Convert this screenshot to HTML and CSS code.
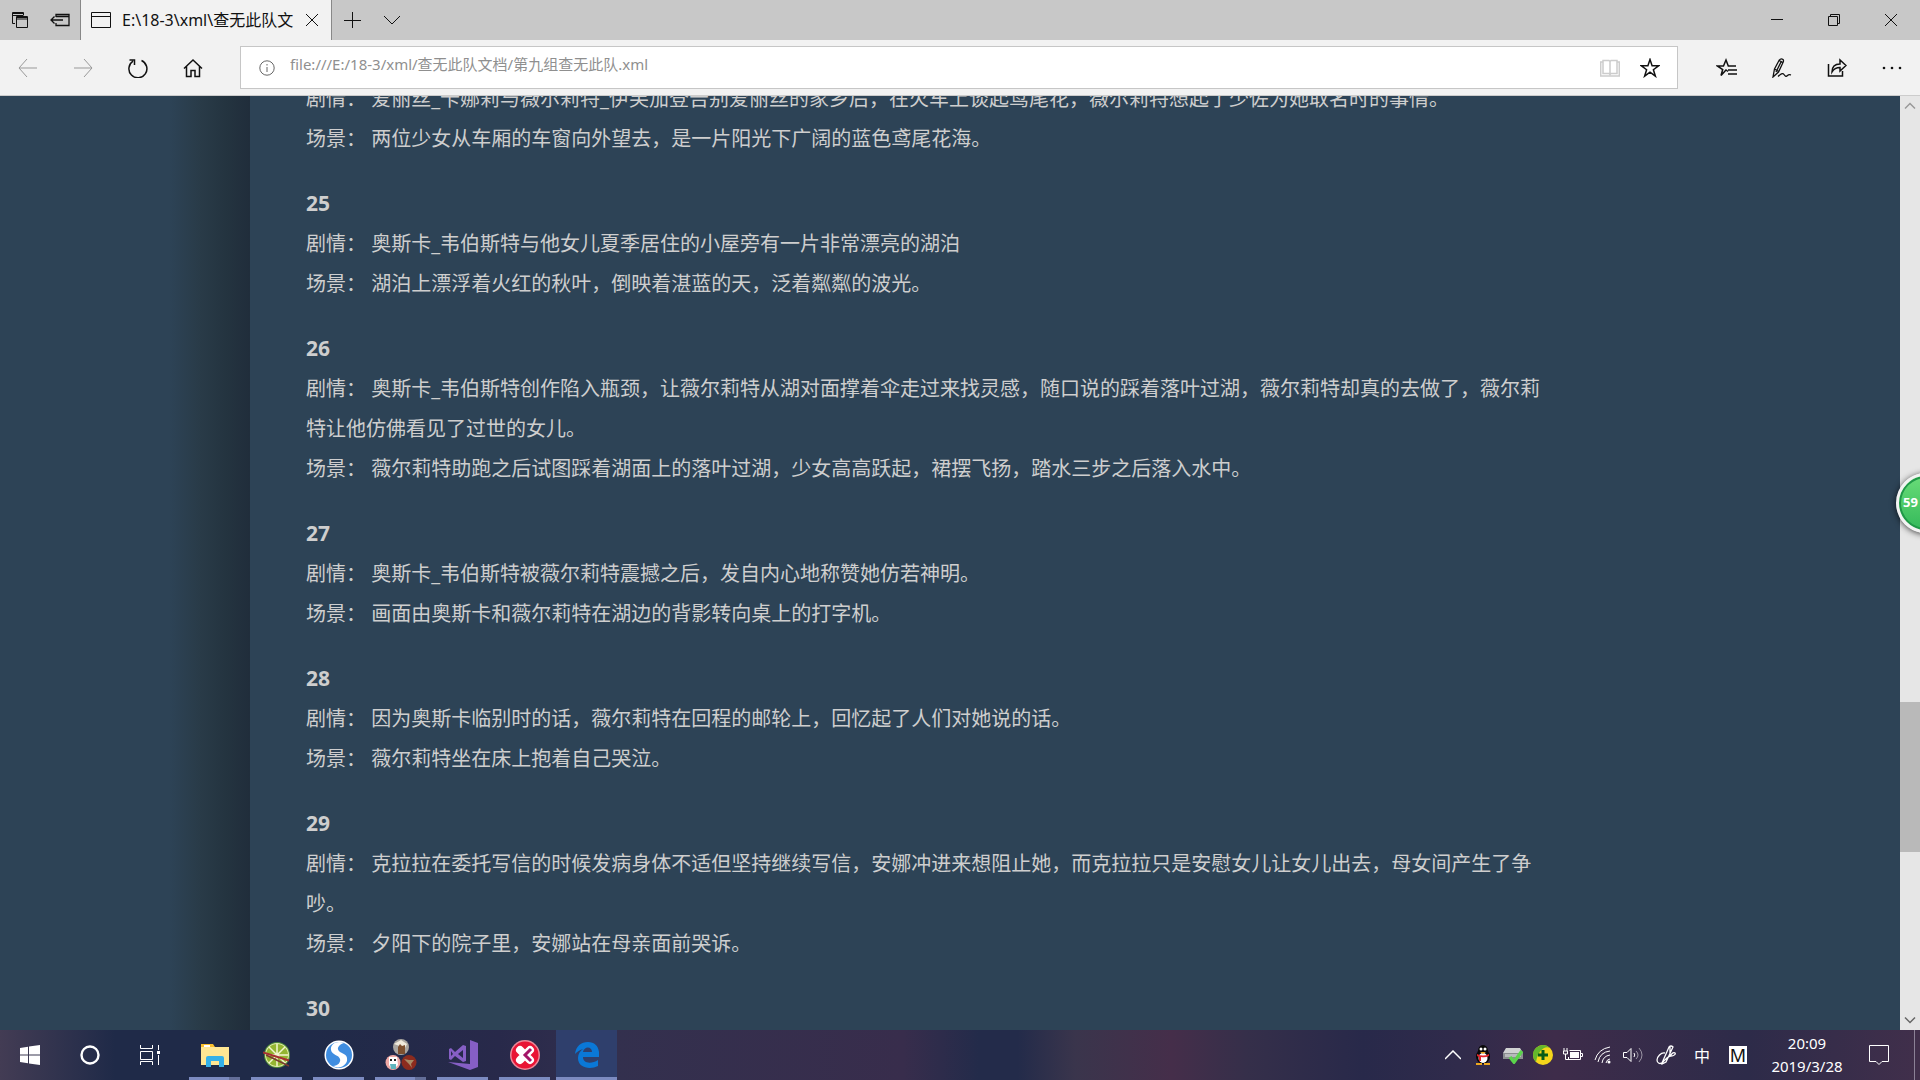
FILE: index.html
```html
<!DOCTYPE html>
<html lang="zh-CN">
<head>
<meta charset="utf-8">
<title>E:\18-3\xml\查无此队文档</title>
<link rel="stylesheet" href="styles.css">
</head>
<body>
<header class="tabbar">
  <button class="tab-tool" aria-label="标签页"><svg width="20" height="20" viewBox="0 0 20 20"><path d="M5 13.500H2.500V2.500h11V5M2.500 5.500h11" /><path d="M6.500 6.500h11v11h-11zM6.500 9h11"/><path d="M2.500 3.500h11M6.500 7.500h11"/></svg></button>
  <button class="tab-tool" aria-label="搁置标签页"><svg width="22" height="20" viewBox="0 0 22 20"><path d="M7 7V4.500h13v11H7V13M7 6.500h13M2 10h12M5.500 6.500L2 10l3.500 3.500" stroke-width="1.300"/></svg></button>
  <div class="tab">
    <svg width="22" height="20" viewBox="0 0 22 20"><path d="M1.500 2.500h19v15h-19zM1.500 6.500h19"/></svg>
    <span class="tab-title">E:\18-3\xml\查无此队文</span>
    <button class="tab-close" aria-label="关闭标签页"><svg width="14" height="14" viewBox="0 0 14 14"><path d="M1 1l12 12M13 1L1 13"/></svg></button>
  </div>
  <button class="tab-new" aria-label="新建标签页"><svg width="18" height="18" viewBox="0 0 18 18"><path d="M9.500 1v16M1 9.500h17"/></svg></button>
  <button class="tab-new" aria-label="预览"><svg width="18" height="18" viewBox="0 0 18 18"><path d="M1 5l8 8 8-8"/></svg></button>
  <div class="window-buttons">
    <button aria-label="最小化"><svg width="12" height="12" viewBox="0 0 12 12"><path d="M0 5.500h12"/></svg></button>
    <button aria-label="还原"><svg width="12" height="12" viewBox="0 0 12 12"><path d="M.5 2.500h9v9h-9zM2.500 2.500v-2h9v9h-2"/></svg></button>
    <button aria-label="关闭"><svg width="12" height="12" viewBox="0 0 12 12"><path d="M0 0l12 12M12 0L0 12"/></svg></button>
  </div>
</header>

<nav class="toolbar">
  <button class="nav-button" disabled aria-label="后退"><svg width="20" height="20" viewBox="0 0 20 20"><path d="M1 10h18M9 1l-8 9 8 9"/></svg></button>
  <button class="nav-button" disabled aria-label="前进"><svg width="20" height="20" viewBox="0 0 20 20"><path d="M19 10H1M11 1l8 9-8 9"/></svg></button>
  <button class="nav-button" aria-label="刷新"><svg class="bold" width="20" height="20" viewBox="0 0 20 20"><path d="M13.500 2.500A9 9 0 1 1 5 3.200M1.500 2h5v5"/></svg></button>
  <button class="nav-button" aria-label="主页"><svg class="bold" width="20" height="20" viewBox="0 0 20 20"><path d="M1 10.500L10 2l9 8.500M3.500 8.500v10h4.500v-6h4v6h4.500v-10"/></svg></button>
  <div class="address">
    <svg class="info" width="16" height="16" viewBox="0 0 16 16"><circle cx="8" cy="8" r="7.200"/><path d="M8 7v5M8 4v1.500"/></svg>
    <input class="url" type="text" aria-label="地址" value="file:///E:/18-3/xml/查无此队文档/第九组查无此队.xml">
    <button class="address-button pale" aria-label="阅读视图"><svg class="bold" width="20" height="20" viewBox="0 0 20 20"><path d="M3 2.500h6l1 1 1-1h6v13h-6l-1 1-1-1H3zM10 3v14M3 4H.7v14h18.600V4H17"/></svg></button>
    <button class="address-button" aria-label="添加到收藏夹"><svg class="bold" width="20" height="20" viewBox="0 0 20 20"><path d="M10 1.500l2.100 6.300h6.500l-5.200 3.900 2 6.500-5.400-4-5.400 4 2-6.500L1.400 7.800h6.500z"/></svg></button>
  </div>
  <div class="toolbar-end">
    <button class="nav-button" aria-label="中心"><svg class="bold" width="22" height="20" viewBox="0 0 22 20"><path d="M12 13.500l-2-1.500-5 5.500 1.700-6L1.300 8h6.200L10 2l2.300 6H20M12 12h9M12 16h9"/></svg></button>
    <button class="nav-button" aria-label="添加笔记"><svg width="20" height="20" viewBox="0 0 20 20"><path stroke-width="1.300" d="M1 19l1.500-8L7 2.500Q9 0 11 1.500q1 1 0 3L6.500 14zM2.500 11l4 2.500M7 2.500l4 2M9.500 3L4 14M6 18.500c4-3.500 5-3.500 6-2s2 2.500 3.500 1 2-1 3.500-.5"/></svg></button>
    <button class="nav-button" aria-label="共享"><svg class="bold" width="20" height="20" viewBox="0 0 20 20"><path d="M1.500 6v12h14v-5M5 14c0-5 3-8 8-8V2l6 5.500-6 5.500V9.500c-4 0-6 1-8 4.500z"/></svg></button>
    <button class="nav-button" aria-label="更多"><svg width="20" height="20" viewBox="0 0 20 20"><g class="solid"><circle cx="2" cy="10" r="1.300"/><circle cx="10" cy="10" r="1.300"/><circle cx="18" cy="10" r="1.300"/></g></svg></button>
  </div>
</nav>

<div class="viewport">
  <aside class="side"></aside>
  <main class="story">
    <section>
      <p>剧情： 爱丽丝_卡娜莉与薇尔莉特_伊芙加登告别爱丽丝的家乡后，在火车上谈起鸢尾花，薇尔莉特想起了少佐为她取名时的事情。</p>
      <p>场景： 两位少女从车厢的车窗向外望去，是一片阳光下广阔的蓝色鸢尾花海。</p>
    </section>
    <section>
      <h2>25</h2>
      <p>剧情： 奥斯卡_韦伯斯特与他女儿夏季居住的小屋旁有一片非常漂亮的湖泊</p>
      <p>场景： 湖泊上漂浮着火红的秋叶，倒映着湛蓝的天，泛着粼粼的波光。</p>
    </section>
    <section>
      <h2>26</h2>
      <p>剧情： 奥斯卡_韦伯斯特创作陷入瓶颈，让薇尔莉特从湖对面撑着伞走过来找灵感，随口说的踩着落叶过湖，薇尔莉特却真的去做了，薇尔莉特让他仿佛看见了过世的女儿。</p>
      <p>场景： 薇尔莉特助跑之后试图踩着湖面上的落叶过湖，少女高高跃起，裙摆飞扬，踏水三步之后落入水中。</p>
    </section>
    <section>
      <h2>27</h2>
      <p>剧情： 奥斯卡_韦伯斯特被薇尔莉特震撼之后，发自内心地称赞她仿若神明。</p>
      <p>场景： 画面由奥斯卡和薇尔莉特在湖边的背影转向桌上的打字机。</p>
    </section>
    <section>
      <h2>28</h2>
      <p>剧情： 因为奥斯卡临别时的话，薇尔莉特在回程的邮轮上，回忆起了人们对她说的话。</p>
      <p>场景： 薇尔莉特坐在床上抱着自己哭泣。</p>
    </section>
    <section>
      <h2>29</h2>
      <p>剧情： 克拉拉在委托写信的时候发病身体不适但坚持继续写信，安娜冲进来想阻止她，而克拉拉只是安慰女儿让女儿出去，母女间产生了争吵。</p>
      <p>场景： 夕阳下的院子里，安娜站在母亲面前哭诉。</p>
    </section>
    <section>
      <h2>30</h2>
    </section>
  </main>
  <div class="scrollbar">
    <button aria-label="向上滚动"><svg width="12" height="8" viewBox="0 0 12 8"><path d="M1 6.500l5-5 5 5"/></svg></button>
    <div class="track-above"></div>
    <div class="thumb"></div>
    <div class="track-below"></div>
    <button class="scroll-down" aria-label="向下滚动"><svg width="12" height="8" viewBox="0 0 12 8"><path d="M1 1.500l5 5 5-5"/></svg></button>
  </div>
  <div class="ball">59</div>
</div>

<footer class="taskbar">
  <div class="system">
    <button aria-label="开始"><svg width="20" height="20" viewBox="0 0 20 20"><path class="fill" d="M0 3l8-1.200v7.700H0zM9 1.600L20 0v9.500H9zM0 10.500h8v7.700L0 17zM9 10.500h11V20L9 18.400z"/></svg></button>
    <button aria-label="搜索"><svg width="20" height="20" viewBox="0 0 20 20"><circle cx="10" cy="10" r="8.500" stroke-width="2.400"/></svg></button>
    <button aria-label="任务视图"><svg width="20" height="20" viewBox="0 0 20 20"><path d="M.5 0v3.500h12V0M.5 20v-3.500h12V20M.5 6.500h12v8H.5zM18.500 0v5M18.500 10v10"/><path class="fill" d="M17 6h3v3h-3z"/></svg></button>
  </div>
  <div class="apps">
    <button class="app grouped" aria-label="文件资源管理器"><svg width="28" height="24" viewBox="0 0 28 24"><path fill="#fbc02d" d="M0 1h12l2 3v5H0z"/><path fill="#ffe793" d="M0 4h28v18H0z"/><path fill="#fff" d="M3 2h6v2H3z"/><path fill="#35b1e8" d="M5 24V15q0-2 2-2h14q2 0 2 2v9h-5v-6H10v6z"/></svg></button>
    <button class="app" aria-label="青柠"><svg width="28" height="28" viewBox="0 0 28 28"><circle cx="14" cy="14" r="13" fill="#4f8c3a"/><circle cx="14" cy="14" r="12" fill="#e6efad"/><circle cx="14" cy="14" r="11" fill="#94b531"/><path class="pith" d="M14 3v22M3 14h22M6 6l16 16M22 6L6 22"/><path class="straw" d="M0 11.500l26 8"/><path class="straw dark" d="M3 14l23 11"/></svg></button>
    <button class="app" aria-label="搜狗浏览器"><svg width="30" height="30" viewBox="0 0 30 30"><circle cx="15" cy="15" r="14.500" fill="#fff"/><circle cx="15" cy="15" r="13" fill="#3f8de0"/><path d="M20 3c-7-3-14 1-13 7 1 5 8 5 9 9 1 3-2 7-7 7 5 3 12 1 14-5 1-6-3-7-7-9-4-3-2-7 4-9z" fill="#fff"/></svg></button>
    <button class="app grouped" aria-label="聊天"><svg width="32" height="32" viewBox="0 0 32 32"><circle cx="16" cy="8" r="8" fill="#aaa6a0"/><path fill="#f0eadc" d="M9 5l7-4 6 4-2 4z"/><path fill="#7d5030" d="M13 8l2-3 2 2 3-1v9h-7z"/><circle cx="8" cy="23.500" r="7.500" fill="#f0a9a5"/><path fill="#fff" d="M4 18h8l1 8-3 3H6l-2-3z"/><path fill="#61b5bd" d="M5 25h6v5H6z"/><path fill="#222" d="M5 20h2v2H5zM9 20h2v2H9z"/><circle cx="24" cy="23.500" r="7.500" fill="#8c2b1e"/><path fill="#a88a65" d="M19 20l5 1 5 0-3 4 1 4-3-4z"/></svg></button>
    <button class="app" aria-label="Visual Studio"><svg width="30" height="30" viewBox="0 0 30 30"><path fill="#865fc5" d="M22 0l8 3v24l-8 3L0 22l22 2zM1 9l2-1 4 4 8-7 3 1v15l-3 1-8-6-4 4-2-1zM3 11v5l2-2zM15 10l-5 4 5 4z" fill-rule="evenodd"/></svg></button>
    <button class="app" aria-label="XMLSpy"><svg width="30" height="30" viewBox="0 0 30 30"><circle cx="15" cy="15" r="15" fill="#eb8999"/><circle cx="15" cy="15" r="13.500" fill="#e91435"/><path d="M10 10l10 10M20 10L10 20" stroke="#fff" stroke-width="8" stroke-linecap="round"/><path d="M21 9l-6 6 6 6" stroke="#a31568" stroke-width="3"/></svg></button>
    <button class="app active" aria-label="Microsoft Edge"><svg width="24" height="26" viewBox="0 0 24 26"><path fill="#0a78d7" d="M0 12C1 4 6 0 13 0c8 0 12 6 11 15H8c0 7 9 7 15 3v6c-8 4-20 2-20-8 0-4 2-7 5-9-4 1-6 3-8 5zM8 10h9c0-6-8-6-9 0z"/></svg></button>
  </div>
  <div class="tray">
    <button class="tray-icon" aria-label="显示隐藏的图标"><svg class="bold" width="16" height="10" viewBox="0 0 16 10"><path d="M0 9l8-8 8 8"/></svg></button>
    <button class="tray-icon" aria-label="QQ"><svg width="16" height="20" viewBox="0 0 16 20"><ellipse cx="8" cy="11.500" rx="7" ry="7.500" fill="#080808"/><ellipse cx="8" cy="6" rx="5" ry="6" fill="#080808"/><ellipse cx="8" cy="13" rx="4.500" ry="5" fill="#fff"/><circle cx="6" cy="4" r="1.500" fill="#fff"/><circle cx="10" cy="4" r="1.500" fill="#fff"/><path fill="#eda61f" d="M5 7h6l-3 2zM1 18h6v2H1zM9 18h6v2H9z"/><path fill="#e3242b" d="M2 9q6 3 12 0v2q-4 2-8 1v4H4v-4l-2-1z"/></svg></button>
    <button class="tray-icon" aria-label="安全删除硬件"><svg width="20" height="18" viewBox="0 0 20 18"><path fill="#d0d2d2" d="M3 2h14l3 5v5H0V7z"/><path fill="#8b8e90" d="M0 7h20v6H0z"/><path fill="#b8babc" d="M2 8h16v3H2z"/><path d="M7 11l4 5 8-11" stroke="#5bd34c" stroke-width="3.500"/></svg></button>
    <button class="tray-icon" aria-label="安全卫士"><svg width="20" height="20" viewBox="0 0 20 20"><circle cx="10" cy="10" r="10" fill="#f4d51b"/><path fill="#64b72c" d="M0 10A10 10 0 0 1 17 3C12 0 5 5 3 17Q0 14 0 10z"/><path d="M10 5v10M5 10h10" stroke="#075b18" stroke-width="3"/></svg></button>
    <button class="tray-icon" aria-label="电池"><svg width="20" height="16" viewBox="0 0 20 16"><path d="M6.500 3.500h11v9h-12V10M18 6.500h1.500v3H18M1 1v3M4 1v3M.5 4v3h4V4zM2.500 7v5.500H6"/><path class="fill" d="M7 5h9v6H7z"/></svg></button>
    <button class="tray-icon" aria-label="网络"><svg width="18" height="18" viewBox="0 0 18 18"><path d="M1 14Q4 3 16 1M4 16Q6 6 16 5M8 17Q9 10 16 9M12 17q1-4 4-4"/><circle class="fill" cx="15" cy="16" r="1.500"/></svg></button>
    <button class="tray-icon" aria-label="音量"><svg width="20" height="16" viewBox="0 0 20 16"><path d="M.5 5.500H4l4-4v13l-4-4H.5zM11 6q1.500 2 0 4"/><path opacity=".5" d="M13 4q4 4 0 8M16 1q6 7 0 14"/></svg></button>
    <button class="tray-icon wide" aria-label="Windows Ink"><svg width="20" height="20" viewBox="0 0 20 20"><path stroke-width="1.300" d="M6 18L13 2q2-2 4 0L10 17l-4 2zM14 2v9M9 8C5 7 1 12 1 15s3 5 6 2 5-6 8-6 5-2 4-3-3 0-4 2"/></svg></button>
    <button class="tray-icon wide ime">中</button>
    <button class="tray-icon wide"><span class="mode">M</span></button>
    <button class="clock"><time>20:09</time><time>2019/3/28</time></button>
    <button class="notice" aria-label="操作中心"><svg width="20" height="20" viewBox="0 0 20 20"><path d="M.5.5h19v16H13l-3 3-3-3H.5z"/></svg></button>
  </div>
</footer>
</body>
</html>
```
FILE: styles.css
```css
* { box-sizing: border-box; }

body {
  margin: 0;
  height: 100vh;
  display: flex;
  flex-direction: column;
  overflow: hidden;
  background: #2d4356;
  font-family: "Noto Sans", "Noto Sans CJK SC", sans-serif;
}

button {
  display: flex;
  align-items: center;
  justify-content: center;
  margin: 0;
  padding: 0;
  border: 0;
  background: none;
  color: inherit;
  font: inherit;
}

svg {
  flex: none;
  fill: none;
  stroke: currentColor;
}

svg [fill] { stroke: none; }
svg .fill, svg .solid { fill: currentColor; stroke: none; }
.bold { stroke-width: 1.5; }

/* Tab strip */
.tabbar {
  display: flex;
  flex: none;
  height: 40px;
  background: #c8c8c8;
  color: #111;
}

.tab-tool { width: 40px; }

.tab {
  display: flex;
  align-items: center;
  width: 252px;
  padding: 0 12px 0 9px;
  gap: 10px;
  border: solid #888;
  border-width: 0 1px;
  background: #f2f2f2;
}

.tab-title {
  flex: 1;
  overflow: hidden;
  font-size: 16px;
  line-height: 24px;
  white-space: nowrap;
}

.tab-new { width: 40px; }

.window-buttons {
  display: flex;
  margin-left: auto;
  padding-right: 1px;
}

.window-buttons button { width: 57px; }

/* Navigation and address */
.toolbar {
  display: flex;
  flex: none;
  align-items: center;
  height: 56px;
  border-bottom: 1px solid #ccc;
  background: #f2f2f2;
  color: #111;
}

.nav-button { width: 55px; height: 55px; }
.nav-button:disabled { color: #999; }

.address {
  display: flex;
  flex: 1;
  align-items: center;
  height: 43px;
  margin-left: 20px;
  padding: 0 7px 0 18px;
  border: 1px solid #c6c6c6;
  background: #fff;
}

.info { color: #666; }

.url {
  flex: 1;
  min-width: 0;
  height: 28px;
  margin: 0 0 8px 15px;
  padding: 0;
  border: 0;
  outline: 0;
  background: none;
  color: #8f8f8f;
  font-family: inherit;
  font-size: 15px;
}

.address-button { width: 40px; height: 40px; }
.pale { color: #ccc; }

.toolbar-end {
  display: flex;
  padding: 0 1px 0 21px;
}

/* Document */
.viewport {
  position: relative;
  display: flex;
  flex: 1;
  min-height: 0;
  overflow: hidden;
}

.side {
  flex: none;
  width: 250px;
  background: linear-gradient(90deg, #2d4356 68%, #293b48 80%, #243440 90%, #202d3b);
}

.story {
  flex: 1;
  height: max-content;
  margin-top: -17px;
  padding: 0 356px 0 56px;
  color: #cecece;
  font-size: 20px;
  line-height: 40px;
  text-spacing-trim: space-all;
}

.story section { margin-bottom: 24px; }
.story p { margin: 0; }

.story h2 {
  margin: 0 0 1px;
  font-size: 21px;
}

.scrollbar {
  display: flex;
  flex: none;
  flex-direction: column;
  width: 20px;
  background: #e6e6e6;
  color: #999;
}

.scrollbar button { height: 20px; }
.scrollbar svg { stroke-width: 1.5; }
.scrollbar .scroll-down { color: #666; }
.track-above { flex: 586; }
.thumb { flex: 150; background: #b9b9b9; }
.track-below { flex: 158; }

.ball {
  position: absolute;
  top: 377px;
  right: -36px;
  width: 60px;
  height: 60px;
  padding-left: 4px;
  border: 3px solid #f3f3f3;
  border-radius: 50%;
  background: linear-gradient(#69dc78, #34b95a);
  box-shadow: 0 1px 6px #000b, inset 0 0 0 2px #209848;
  color: #fff;
  font-size: 13px;
  font-weight: 700;
  line-height: 52px;
}

/* Taskbar */
.taskbar {
  display: flex;
  flex: none;
  height: 50px;
  background: linear-gradient(90deg, #433c54, #1f2a48 6%, #1f2a48 16%, #28294a 26%, #33304e 32%, #382d4c 47%, #232b4a 51%, #232b4a 53%, #3a354c 56%, #452e4a 61%, #352f4a 65%, #28294a 71%, #302b4b 76%, #3e2c4a 81%, #2d2b49 91%, #412f4b);
  color: #fff;
}

.system, .apps, .tray { display: flex; }
.system { margin-right: 3px; }
.system button { width: 60px; }

.app {
  width: 62px;
  border: solid transparent;
  border-width: 0 5px 0 6px;
  background: linear-gradient(#7c8bc0, #7c8bc0) bottom / 100% 3px no-repeat padding-box;
}

.app.grouped {
  background: linear-gradient(90deg, #7c8bc0 78%, #636e98 78%) bottom / 100% 3px no-repeat padding-box;
}

.app.active {
  border-width: 0 0 0 1px;
  background: linear-gradient(#2f3f6c 47px, #7c8bc0 47px) padding-box;
}

.pith { stroke: #f2f6d0; stroke-width: 1.5; }
.straw { stroke: #a53030; stroke-width: 2; }
.straw.dark { stroke: #7a3a30; stroke-width: 1.5; }

.tray { margin-left: auto; }
.tray-icon { width: 30px; }
.tray-icon.wide { width: 36px; }
.ime { font-size: 16px; }

.mode {
  width: 18px;
  height: 18px;
  background: #fff;
  color: #111;
  font-size: 18px;
  line-height: 18px;
}

.clock {
  flex-direction: column;
  width: 102px;
  font-size: 15px;
  line-height: 23px;
}

.notice {
  width: 57px;
  margin-right: 5px;
  border-right: 1px solid #8b8196;
  padding-right: 14px;
}
```
